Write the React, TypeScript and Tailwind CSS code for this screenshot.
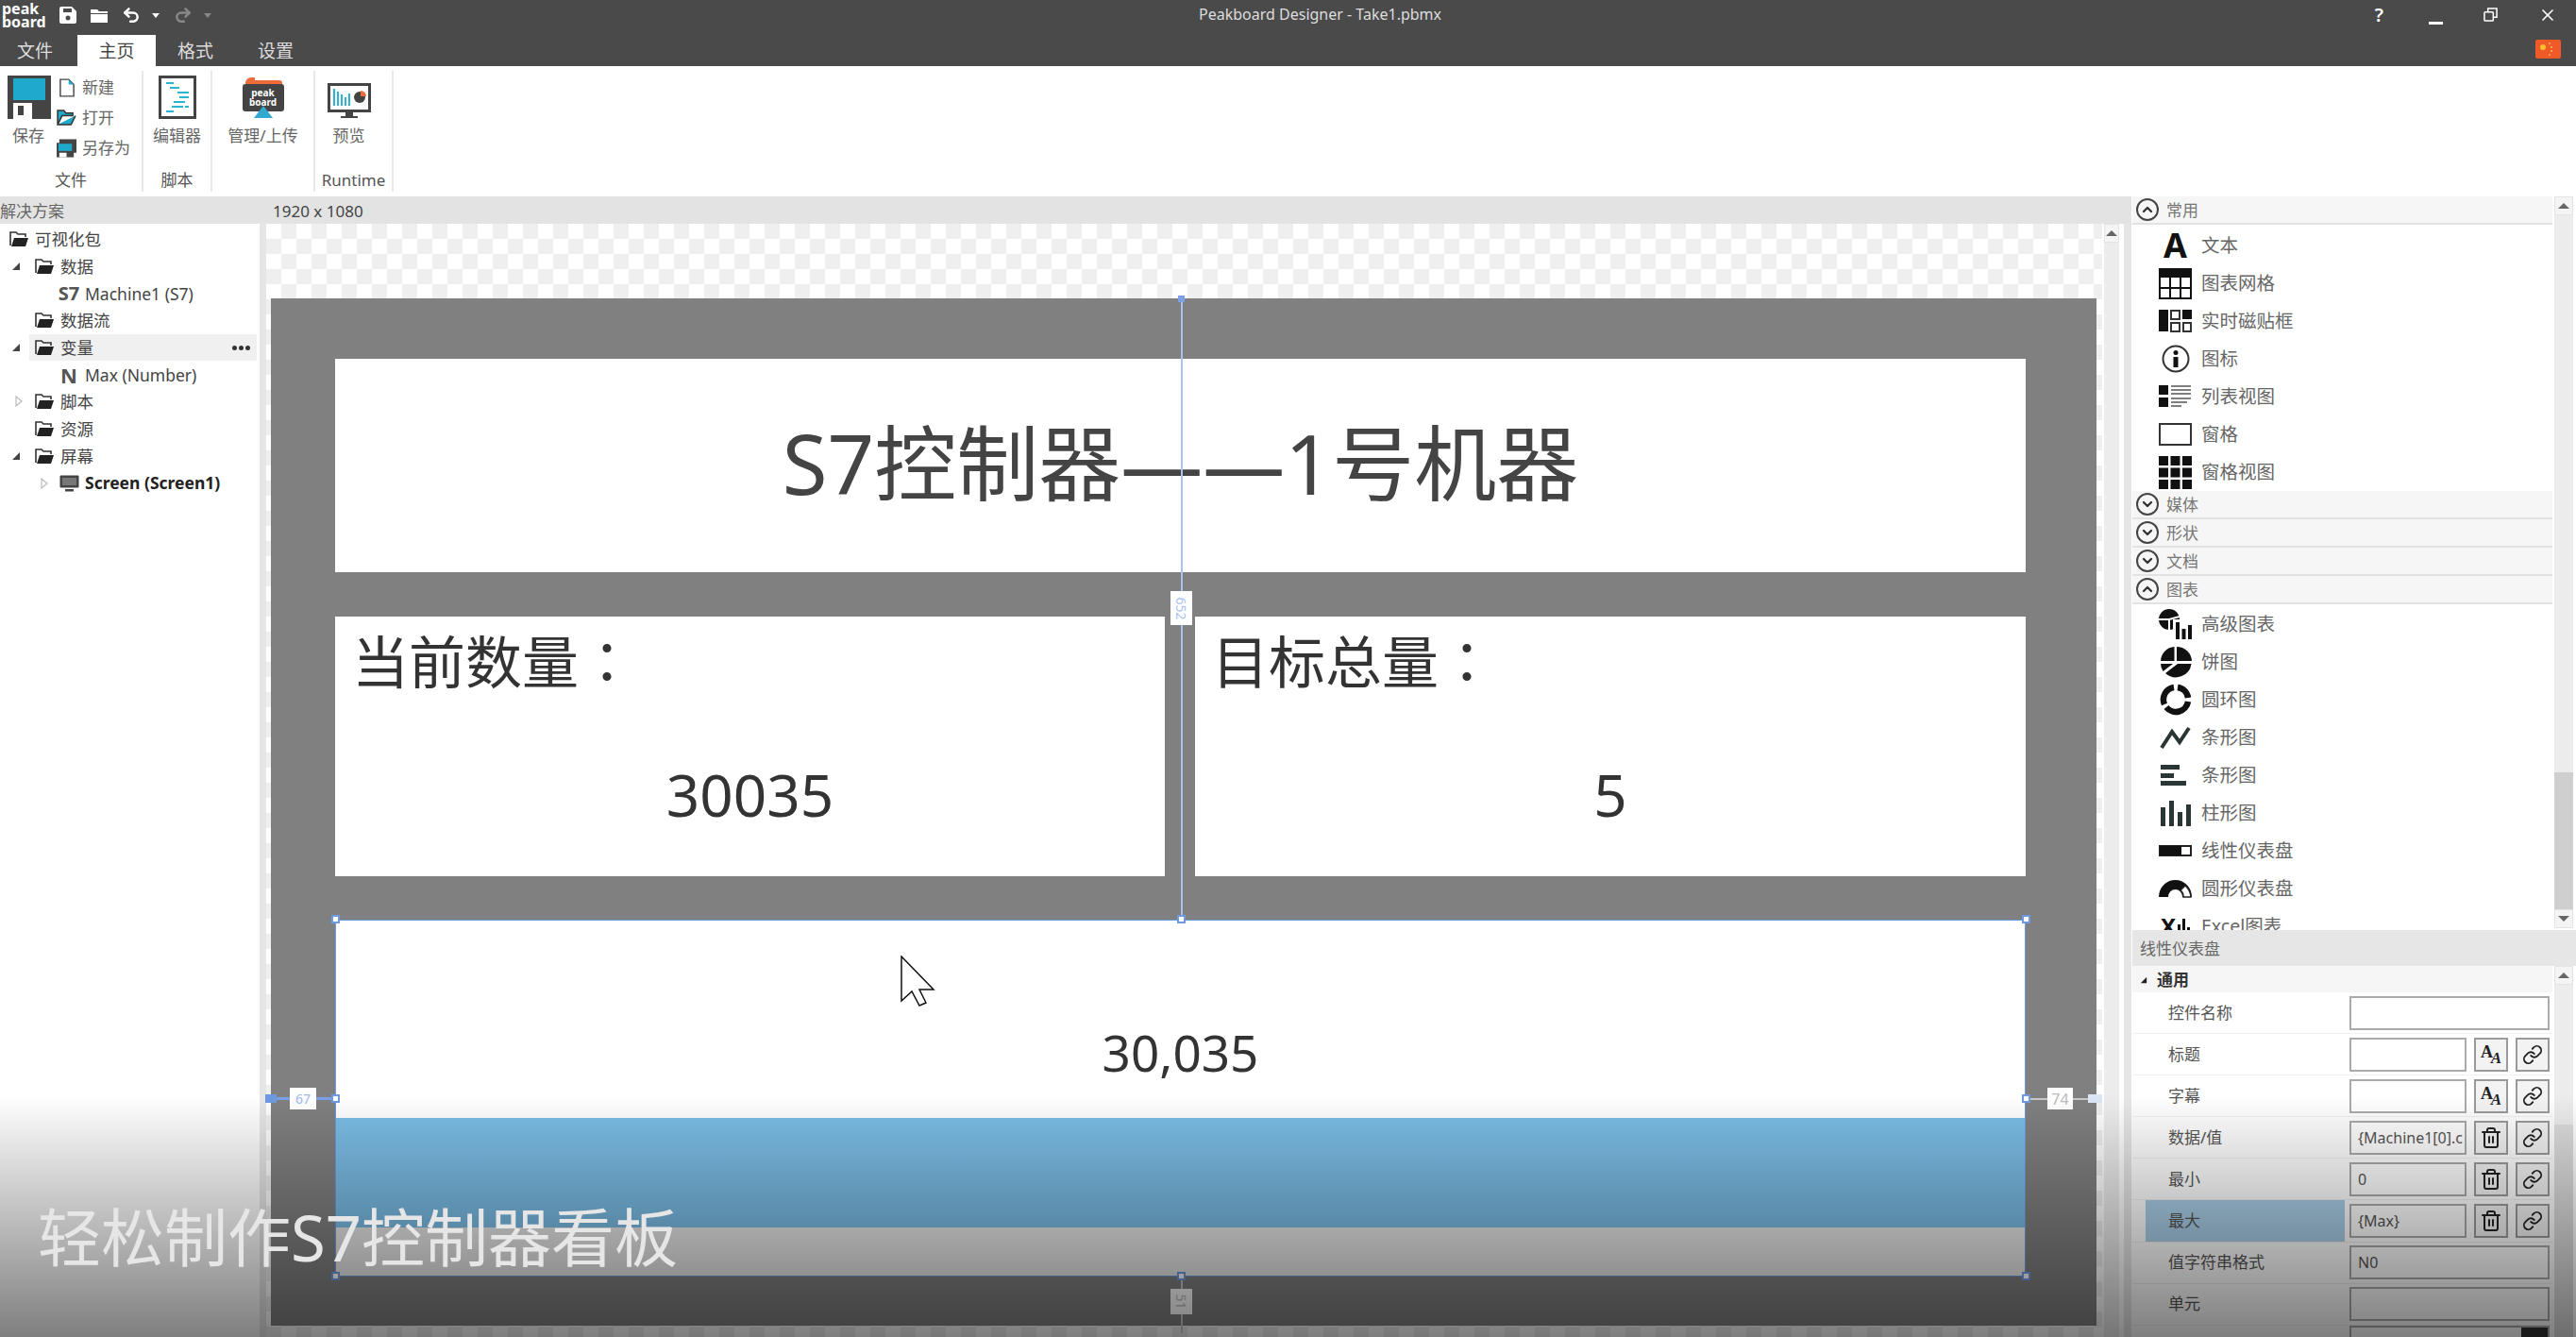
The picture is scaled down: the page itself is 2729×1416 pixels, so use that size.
import { ChevronDown, ChevronUp, Link, Redo2, Trash2, Undo2, X } from 'lucide-react'

const FOLDER_TREE = [
  { label: '可视化包', pad: 'pl-[9px]', arrow: null, icon: 'folder' },
  { label: '数据', pad: 'pl-[36px]', arrow: 'down', icon: 'folder' },
  { label: 'Machine1 (S7)', pad: 'pl-[62px]', arrow: null, icon: 'S7' },
  { label: '数据流', pad: 'pl-[36px]', arrow: null, icon: 'folder' },
  { label: '变量', pad: 'pl-[36px]', arrow: 'down', icon: 'folder', active: true },
  { label: 'Max (Number)', pad: 'pl-[62px]', arrow: null, icon: 'N' },
  { label: '脚本', pad: 'pl-[36px]', arrow: 'right', icon: 'folder' },
  { label: '资源', pad: 'pl-[36px]', arrow: null, icon: 'folder' },
  { label: '屏幕', pad: 'pl-[36px]', arrow: 'down', icon: 'folder' },
  { label: 'Screen (Screen1)', pad: 'pl-[62px]', arrow: 'rightInner', icon: 'screen', bold: true },
]

function FolderIcon({ className = 'h-[18px] w-[21px]' }: { className?: string }) {
  return (
    <svg viewBox="0 0 21 18" className={className}>
      <path d="M1 16V2h6l2 2h8v3" fill="none" stroke="#333" strokeWidth="1.6" />
      <path d="M2 17l3-9h15l-3 9z" fill="#222" />
    </svg>
  )
}

function Tri({ dir }: { dir: string }) {
  if (dir === 'down') {
    return (
      <svg viewBox="0 0 10 10" className="h-[10px] w-[10px]">
        <path d="M9 1v8H1z" fill="#444" />
      </svg>
    )
  }
  return (
    <svg viewBox="0 0 10 12" className="h-[12px] w-[10px]">
      <path d="M2 1l6 5-6 5z" fill="#fff" stroke="#bbb" strokeWidth="1.2" />
    </svg>
  )
}

function TreeRow({ row }: { row: (typeof FOLDER_TREE)[number] }) {
  return (
    <div className={`relative flex h-[28.7px] items-center gap-[6px] text-[17.5px] text-[#444] ${row.pad}`}>
      {row.active && <div className="absolute inset-y-0 left-[31px] right-[3px] bg-[#f0f0f0]" />}
      {row.arrow === 'down' && <div className="absolute left-[12px] z-10 flex"><Tri dir="down" /></div>}
      {row.arrow === 'right' && <div className="absolute left-[15px] z-10 flex"><Tri dir="right" /></div>}
      {row.arrow === 'rightInner' && <div className="absolute left-[42px] z-10 flex"><Tri dir="right" /></div>}
      <div className="z-10 flex w-[22px] shrink-0 items-center justify-center">
        {row.icon === 'folder' && <FolderIcon />}
        {row.icon === 'S7' && <span className="text-[20px] font-bold leading-none text-[#555]">S7</span>}
        {row.icon === 'N' && <span className="text-[22px] font-bold leading-none text-[#555]">N</span>}
        {row.icon === 'screen' && (
          <svg viewBox="0 0 21 18" className="h-[18px] w-[21px]">
            <rect x="0.5" y="0.5" width="20" height="13" rx="1" fill="#444" />
            <rect x="3" y="3" width="15" height="8" fill="#777" />
            <rect x="6" y="15" width="9" height="2.5" fill="#444" />
          </svg>
        )}
      </div>
      <span className={`z-10 ${row.bold ? 'font-bold text-[#222]' : ''}`}>{row.label}</span>
      {row.active && (
        <div className="absolute right-[10px] z-10 flex gap-[2px]">
          <i className="h-[5px] w-[5px] rounded-full bg-[#333]" />
          <i className="h-[5px] w-[5px] rounded-full bg-[#333]" />
          <i className="h-[5px] w-[5px] rounded-full bg-[#333]" />
        </div>
      )}
    </div>
  )
}

function RibbonGroup({ label, width, children }: { label: string; width: string; children: React.ReactNode }) {
  return (
    <div className={`flex h-[128px] flex-col border-r-2 border-[#e8e8e8] ${width}`}>
      <div className="flex h-[105px] pt-[5px]">{children}</div>
      <div className="text-center text-[17px] leading-[24px] text-[#555]">{label}</div>
    </div>
  )
}

function SectionHead({ label, open }: { label: string; open?: boolean }) {
  return (
    <div className="flex h-[30px] items-center gap-[8px] border-b-2 border-[#e2e2e2] bg-[#f6f6f6] pl-[4px] text-[17px] text-[#777]">
      <div className="flex h-[24px] w-[24px] items-center justify-center rounded-full border-2 border-[#444]">
        {open ? <ChevronUp size={16} strokeWidth={3.5} color="#333" /> : <ChevronDown size={16} strokeWidth={3.5} color="#333" />}
      </div>
      <span className="pt-[2px]">{label}</span>
    </div>
  )
}

function ToolRow({ label, children }: { label: string; children: React.ReactNode }) {
  return (
    <div className="flex h-[40px] shrink-0 items-center gap-[10px] pl-[28px] text-[19.5px] text-[#666]">
      <div className="flex h-[36px] w-[35px] items-center justify-center">{children}</div>
      {label}
    </div>
  )
}

function TextIcon() {
  return <span className="text-[36px] font-bold leading-none text-[#111]">A</span>
}

function GridIcon() {
  return (
    <svg viewBox="0 0 35 33" className="h-[33px] w-[35px]">
      <rect x="1" y="1" width="33" height="31" fill="#fff" stroke="#111" strokeWidth="2" />
      <rect x="1" y="1" width="33" height="9" fill="#111" />
      <path d="M12 10v22M23 10v22M1 21h33" stroke="#111" strokeWidth="2" />
    </svg>
  )
}

function TileIcon() {
  return (
    <svg viewBox="0 0 35 24" className="h-[24px] w-[35px]">
      <rect x="0" y="0" width="10" height="23" fill="#111" />
      <rect x="13" y="1" width="9" height="9" fill="#fff" stroke="#333" strokeWidth="2" />
      <rect x="25" y="0" width="10" height="10" fill="#111" />
      <rect x="13" y="14" width="9" height="9" fill="#fff" stroke="#333" strokeWidth="2" />
      <rect x="26" y="14" width="8" height="9" fill="#fff" stroke="#333" strokeWidth="2" />
    </svg>
  )
}

function InfoIcon() {
  return (
    <svg viewBox="0 0 30 30" className="h-[30px] w-[30px]">
      <circle cx="15" cy="15" r="13.5" fill="none" stroke="#333" strokeWidth="2" />
      <circle cx="15" cy="8.5" r="2.5" fill="#111" />
      <rect x="12.5" y="13" width="5" height="11" fill="#111" />
    </svg>
  )
}

function ListIcon() {
  return (
    <svg viewBox="0 0 35 24" className="h-[24px] w-[35px]">
      <rect x="0" y="0" width="10" height="10" fill="#111" />
      <rect x="0" y="13" width="10" height="10" fill="#111" />
      <path d="M13 1h21M13 5h21M13 9h21M13 14h21M13 18h17M13 22h11" stroke="#555" strokeWidth="1.4" />
    </svg>
  )
}

function PaneGridIcon() {
  return (
    <svg viewBox="0 0 35 35" className="h-[35px] w-[35px]" fill="#111">
      {[0, 12.5, 25].map((y) =>
        [0, 12.5, 25].map((x) => <rect key={`${x}-${y}`} x={x} y={y} width="10" height="10" />),
      )}
    </svg>
  )
}

function ComboIcon() {
  return (
    <svg viewBox="0 0 35 32" className="h-[32px] w-[35px]">
      <circle cx="11" cy="11" r="11" fill="#111" />
      <path d="M11 11v12M0 11h11l11-3" fill="none" stroke="#fff" strokeWidth="2" />
      <rect x="15" y="11" width="20" height="21" fill="#fff" />
      <rect x="18" y="14" width="4" height="18" fill="#111" />
      <rect x="24.5" y="21" width="4" height="11" fill="#111" />
      <rect x="31" y="17" width="4" height="15" fill="#111" />
    </svg>
  )
}

function PieIcon() {
  return (
    <svg viewBox="0 0 34 34" className="h-[34px] w-[34px]" fill="#111">
      <path d="M15.5 1v15H1A15.5 15.5 0 0 1 15.5 1z" />
      <path d="M18 1a16 16 0 0 1 16 15H18z" />
      <path d="M33.5 19A16.5 16.5 0 0 1 6 29l13-10z" />
      <path d="M1 19h13L3.5 27a16 16 0 0 1-2.5-8z" />
    </svg>
  )
}

function DonutIcon() {
  return (
    <svg viewBox="0 0 34 34" className="h-[34px] w-[34px]" fill="none" stroke="#111" strokeWidth="6.5">
      <path d="M15 4A13 13 0 0 0 5 22" />
      <path d="M19 4A13 13 0 0 1 30 15" />
      <path d="M30 19A13 13 0 0 1 7 25" />
    </svg>
  )
}

function LineIcon() {
  return (
    <svg viewBox="0 0 33 26" className="h-[26px] w-[33px]">
      <path d="M2 24L13 7l8 11L31 3" fill="none" stroke="#2a3535" strokeWidth="4" />
    </svg>
  )
}

function BarIcon() {
  return (
    <svg viewBox="0 0 35 24" className="h-[24px] w-[35px]" fill="#2a3535">
      <rect x="2" y="1" width="20" height="5" />
      <rect x="2" y="10" width="14" height="5" />
      <rect x="2" y="18" width="27" height="5" />
    </svg>
  )
}

function ColumnIcon() {
  return (
    <svg viewBox="0 0 35 27" className="h-[27px] w-[35px]" fill="#2a3535">
      <rect x="2" y="7" width="5" height="20" />
      <rect x="11" y="0" width="5" height="27" />
      <rect x="20" y="12" width="5" height="15" />
      <rect x="29" y="4" width="5" height="23" />
    </svg>
  )
}

function LinearIcon() {
  return (
    <svg viewBox="0 0 35 12" className="h-[12px] w-[35px]">
      <rect x="1" y="1" width="33" height="10" fill="#fff" stroke="#222" strokeWidth="2" />
      <rect x="1" y="1" width="23" height="10" fill="#111" />
    </svg>
  )
}

function RadialIcon() {
  return (
    <svg viewBox="0 0 35 20" className="h-[20px] w-[35px]">
      <path d="M0 19a17.5 18 0 0 1 35 0H25a7.5 8 0 0 0-15 0z" fill="#111" />
      <path d="M28 7a17 18 0 0 1 6 12H26a8 8 0 0 0-3-7z" fill="#fff" stroke="#222" strokeWidth="1.4" />
    </svg>
  )
}

function ExcelIcon() {
  return (
    <div className="flex items-end gap-[2px]">
      <span className="text-[24px] font-bold leading-none text-[#111]">X</span>
      <i className="h-[14px] w-[3px] bg-[#111]" />
      <i className="h-[20px] w-[3px] bg-[#111]" />
      <i className="h-[11px] w-[3px] bg-[#111]" />
    </div>
  )
}

function SquareBtn({ children }: { children: React.ReactNode }) {
  return (
    <div className="flex h-[36px] w-[36px] shrink-0 items-center justify-center border-2 border-[#9a9a9a] bg-[#f3f3f3]">
      {children}
    </div>
  )
}

function FontBtn() {
  return (
    <SquareBtn>
      <span className="relative h-[24px] w-[22px] font-['Liberation_Serif',serif] font-bold leading-none text-[#222]">
        <span className="absolute left-0 top-0 text-[18px]">A</span>
        <span className="absolute bottom-0 right-0 text-[17px] italic">A</span>
      </span>
    </SquareBtn>
  )
}

function LinkBtn() {
  return (
    <SquareBtn>
      <Link size={22} color="#222" strokeWidth={2} />
    </SquareBtn>
  )
}

function TrashBtn() {
  return (
    <SquareBtn>
      <Trash2 size={24} color="#222" strokeWidth={2} />
    </SquareBtn>
  )
}

function PropRow({ label, children, active }: { label: string; children: React.ReactNode; active?: boolean }) {
  return (
    <div className="flex h-[44.1px] shrink-0 items-center border-b border-[#f0f0f0] pl-[14px]">
      <div className={`flex h-full w-[211px] items-center pl-[24px] text-[17px] text-[#555] ${active ? 'bg-[#aacfe8]' : ''}`}>
        {label}
      </div>
      <div className="ml-[5px] flex w-[212px] gap-[8px]">{children}</div>
    </div>
  )
}

function Field({ value, short }: { value?: string; short?: boolean }) {
  return (
    <div
      className={`flex h-[36px] items-center overflow-hidden whitespace-nowrap border-2 border-[#aaa] bg-white pl-[7px] text-[16px] text-[#555] ${
        short ? 'w-[124px] shrink-0' : 'w-[212px]'
      }`}
    >
      {value}
    </div>
  )
}

function Handle({ className }: { className: string }) {
  return <div className={`absolute h-[9px] w-[9px] border-2 border-[#6f9ae0] bg-white ${className}`} />
}

function ScrollBtn({ up }: { up?: boolean }) {
  return (
    <div className="flex h-[20px] items-center justify-center border border-[#e4e4e4] bg-[#f4f4f4]">
      <div
        className={`h-0 w-0 border-x-[6px] border-x-transparent ${up ? 'border-b-[6px] border-b-[#666]' : 'border-t-[6px] border-t-[#666]'}`}
      />
    </div>
  )
}

export default function App() {
  return (
    <div className="relative flex h-[1416px] w-[2729px] flex-col overflow-hidden bg-white font-['Noto_Sans','Noto_Sans_CJK_SC',sans-serif]">
      {/* Title bar */}
      <header className="flex h-[37px] shrink-0 items-start bg-[#4a4a4a] pt-[2px] text-white">
        <div className="flex w-[1270px] items-center">
          <div className="ml-[2px] w-[48px] text-[16px] font-bold leading-[14px]">
            <div>peak</div>
            <div>board</div>
          </div>
          <svg viewBox="0 0 18 18" className="ml-[13px] h-[18px] w-[18px]" fill="#fff">
            <path d="M0 2a2 2 0 0 1 2-2h11l5 5v11a2 2 0 0 1-2 2H2a2 2 0 0 1-2-2z" />
            <rect x="4" y="2" width="9" height="4" fill="#4a4a4a" />
            <circle cx="9" cy="12" r="2.5" fill="#4a4a4a" />
          </svg>
          <svg viewBox="0 0 18 16" className="ml-[15px] h-[16px] w-[18px]" fill="#fff">
            <path d="M0 2h7l2 2h9v2H0zM0 7h18v9H0z" />
          </svg>
          <Undo2 size={20} className="ml-[15px]" color="#fff" strokeWidth={3} />
          <div className="ml-[12px] h-0 w-0 border-x-[4px] border-t-[5px] border-x-transparent border-t-white" />
          <Redo2 size={20} className="ml-[15px]" color="#888" strokeWidth={3} />
          <div className="ml-[12px] h-0 w-0 border-x-[4px] border-t-[5px] border-x-transparent border-t-[#888]" />
        </div>
        <div className="mt-[5px] text-[16px] leading-none text-[#ddd]">Peakboard Designer - Take1.pbmx</div>
        <div className="ml-auto flex h-[27px] items-center pr-[20px]">
          <span className="text-[20px] font-semibold leading-none">?</span>
          <div className="ml-[48px] mt-[18px] h-[3px] w-[15px] bg-white" />
          <svg viewBox="0 0 16 16" className="ml-[43px] h-[15px] w-[15px]" fill="none" stroke="#fff" strokeWidth="1.6">
            <rect x="1" y="5" width="10" height="10" rx="1" />
            <path d="M5 5V1h10v10h-4" />
          </svg>
          <X size={20} className="ml-[43px]" color="#fff" strokeWidth={2} />
        </div>
      </header>

      {/* Tabs */}
      <nav className="flex h-[33px] shrink-0 items-end bg-[#4a4a4a] text-[19px] leading-[32px] text-[#ddd]">
        <div className="w-[82px] pr-[8px] pt-[1px] text-center">文件</div>
        <div className="w-[83px] bg-white pt-[1px] text-center text-[#444]">主页</div>
        <div className="w-[84px] pt-[1px] text-center">格式</div>
        <div className="w-[86px] pt-[1px] text-center">设置</div>
        <div className="relative mb-[8px] ml-auto mr-[16px] h-[20px] w-[27px] rounded-[2px] bg-[#f05a28]">
          <i className="absolute left-[5px] top-[5px] h-[6px] w-[6px] rounded-full bg-[#fbc02d]" />
          <i className="absolute left-[14px] top-[3px] h-[2px] w-[2px] bg-[#f9a03f]" />
          <i className="absolute left-[16px] top-[7px] h-[2px] w-[2px] bg-[#f9a03f]" />
          <i className="absolute left-[16px] top-[11px] h-[2px] w-[2px] bg-[#f9a03f]" />
          <i className="absolute left-[14px] top-[15px] h-[2px] w-[2px] bg-[#f9a03f]" />
        </div>
      </nav>

      {/* Ribbon */}
      <section className="flex h-[138px] shrink-0 pt-[5px]">
        <RibbonGroup label="文件" width="w-[152px]">
          <div className="flex w-[60px] flex-col items-center">
            <svg viewBox="0 0 46 46" className="ml-[1px] h-[46px] w-[46px]">
              <rect width="46" height="46" fill="#444" />
              <rect x="6" y="3" width="34" height="23" fill="#1fa9cb" />
              <rect x="6" y="29" width="20" height="17" fill="#fff" />
              <rect x="11" y="32" width="6" height="10" fill="#444" />
            </svg>
            <span className="mt-[5px] text-[17px] text-[#666]">保存</span>
          </div>
          <div className="-mt-[2px] flex flex-col gap-[3px] text-[17px] text-[#666]">
            <div className="flex h-[29px] items-center gap-[8px]">
              <svg viewBox="0 0 18 22" className="ml-[3px] h-[22px] w-[16px]">
                <path d="M1 1h10l6 6v14H1z" fill="#fff" stroke="#444" strokeWidth="1.6" />
                <path d="M11 1l6 6h-6z" fill="#1fa9cb" />
              </svg>
              新建
            </div>
            <div className="flex h-[29px] items-center gap-[6px]">
              <svg viewBox="0 0 22 18" className="h-[17px] w-[21px]">
                <path d="M1 17V1h7l2 3h8v3H6l-5 10h15l5-10" fill="#1fa9cb" stroke="#333" strokeWidth="1.6" />
              </svg>
              打开
            </div>
            <div className="flex h-[29px] items-center gap-[6px]">
              <svg viewBox="0 0 22 20" className="h-[20px] w-[21px]">
                <rect x="3" y="0" width="19" height="15" fill="#444" />
                <rect x="0" y="4" width="19" height="16" fill="#444" />
                <rect x="2" y="5" width="15" height="8" fill="#1fa9cb" />
                <rect x="3" y="15" width="8" height="5" fill="#fff" />
              </svg>
              另存为
            </div>
          </div>
        </RibbonGroup>
        <RibbonGroup label="脚本" width="w-[73px]">
          <div className="flex w-full flex-col items-center">
            <svg viewBox="0 0 40 46" className="h-[46px] w-[40px]">
              <rect x="1.5" y="1.5" width="37" height="43" fill="#fff" stroke="#444" strokeWidth="3" />
              <path d="M8 8h8M12 13h10M20 18h12M22 23h10M16 28h12M14 33h12M28 33h4M8 38h8" stroke="#2fb3d3" strokeWidth="2" />
            </svg>
            <span className="mt-[5px] text-[17px] text-[#666]">编辑器</span>
          </div>
        </RibbonGroup>
        <RibbonGroup label="" width="w-[109px]">
          <div className="flex w-full flex-col items-center">
            <div className="relative h-[46px] w-[46px]">
              <svg viewBox="0 0 46 46" className="h-[46px] w-[46px]">
                <path d="M10 2h4v3h26a3 3 0 0 1 0 6H14v3h-4a6 6 0 0 1 0-12z" fill="#ee6b3a" />
                <rect x="1" y="9" width="44" height="29" rx="3" fill="#444" />
                <path d="M23 32l-10 13h20z" fill="#2fa9cf" />
              </svg>
              <div className="absolute inset-x-0 top-[13px] text-center text-[10px] font-bold leading-[10px] text-white">
                <div>peak</div>
                <div>board</div>
              </div>
            </div>
            <span className="mt-[5px] text-[17px] text-[#666]">管理/上传</span>
          </div>
        </RibbonGroup>
        <RibbonGroup label="Runtime" width="w-[83px]">
          <div className="-ml-[5px] flex w-full flex-col items-center">
            <svg viewBox="0 0 46 38" className="mt-[8px] h-[38px] w-[46px]">
              <rect x="1.5" y="1.5" width="43" height="28" fill="#fff" stroke="#444" strokeWidth="3" />
              <path d="M7 6v18M11 9v15M15 12v12M19 15v9M23 11v13" stroke="#2fb3d3" strokeWidth="2" />
              <circle cx="34" cy="15" r="6" fill="#444" />
              <path d="M35 8a6 6 0 0 1 6 6h-6z" fill="#ee6b3a" />
              <path d="M14 36h18M20 30h6v6h-6z" fill="#444" stroke="#444" strokeWidth="2" />
            </svg>
            <span className="mt-[5px] text-[17px] text-[#666]">预览</span>
          </div>
        </RibbonGroup>
      </section>

      {/* Workspace */}
      <main className="flex min-h-0 flex-1">
        {/* Solution tree */}
        <aside className="w-[275px] shrink-0">
          <div className="h-[29px] bg-[#e3e3e3] pt-[1px] text-[17px] leading-[29px] text-[#666]">解决方案</div>
          <div className="pt-[2px]">
            {FOLDER_TREE.map((row) => (
              <TreeRow key={row.label} row={row} />
            ))}
          </div>
        </aside>

        {/* Canvas column */}
        <div className="flex w-[1983px] shrink-0 flex-col">
          <div className="h-[29px] bg-[#e3e3e3] pl-[14px] pt-[1px] text-[17px] leading-[29px] text-[#444]">
            <span>1920 x 1080</span>
          </div>
          <div className="flex min-h-0 flex-1">
            <div className="w-[7px] shrink-0 bg-[#e6e6e6]" />
            <div className="w-[1945px] shrink-0 bg-[repeating-conic-gradient(#efefef_0_25%,#ffffff_0_50%)] bg-[length:32px_32px] pl-[5px] pt-[79px]">
              <div className="relative h-[1088px] w-[1934px] bg-[#808080] pl-[68px] pr-[75px] pt-[64px]">
                <div className="flex h-[226px] items-center justify-center bg-white pb-[5px] text-[87px] leading-none text-[#444]">
                  S7控制器——1号机器
                </div>
                <div className="mt-[47px] flex h-[275px] gap-[32px]">
                  <div className="flex w-[879px] flex-col bg-white pl-[18px] pt-[10px] text-[#333]">
                    <div className="text-[60px] leading-[70px]">
                      当前数量<span className="font-['Noto_Sans_CJK_TC',sans-serif]">：</span>
                    </div>
                    <div className="mt-[63px] pr-[18px] text-center text-[62px] leading-[84px]">30035</div>
                  </div>
                  <div className="flex w-[880px] flex-col bg-white pl-[18px] pt-[10px] text-[#333]">
                    <div className="text-[60px] leading-[70px]">
                      目标总量<span className="font-['Noto_Sans_CJK_TC',sans-serif]">：</span>
                    </div>
                    <div className="mt-[63px] pr-[18px] text-center text-[62px] leading-[84px]">5</div>
                  </div>
                </div>
                <div className="mt-[46px] flex h-[378px] flex-col border border-[#6f9ae0]">
                  <div className="flex h-[209px] items-end justify-center bg-white pb-[34px] text-[53px] leading-[70px] text-[#333]">
                    30,035
                  </div>
                  <div className="h-[116px] bg-[#7bbde6]" />
                  <div className="flex-1 bg-[#e8e8e8]" />
                </div>

                {/* Selection guides */}
                <div className="absolute left-[964px] top-0 h-[657px] w-[2px] bg-[#a9c3f0]" />
                <div className="absolute left-[961px] top-[-3px] h-[7px] w-[7px] bg-[#7aa0e6]" />
                <div className="absolute left-[953px] top-[310px] flex h-[36px] w-[23px] items-center justify-center bg-white">
                  <span className="rotate-90 text-[14px] text-[#a9c3f0]">652</span>
                </div>
                <Handle className="left-[960px] top-[653px]" />
                <Handle className="left-[64px] top-[653px]" />
                <Handle className="right-[70px] top-[653px]" />
                <Handle className="left-[64px] top-[843px]" />
                <Handle className="right-[70px] top-[843px]" />
                <Handle className="left-[64px] top-[1031px]" />
                <Handle className="right-[70px] top-[1031px]" />
                <Handle className="left-[960px] top-[1031px]" />
                <div className="absolute left-[-6px] top-[846px] h-[3px] w-[70px] bg-[#7aa0e6]" />
                <div className="absolute left-[-6px] top-[843px] h-[9px] w-[12px] bg-[#6f9ae0]" />
                <div className="absolute left-[20px] top-[836px] flex h-[23px] w-[28px] items-center justify-center bg-white text-[14px] text-[#9db9ea]">
                  67
                </div>
                <div className="absolute right-[0px] top-[847px] h-[2px] w-[70px] bg-[#c8c8c8]" />
                <div className="absolute right-[-6px] top-[843px] h-[9px] w-[15px] bg-[#dde6f5]" />
                <div className="absolute right-[25px] top-[836px] flex h-[23px] w-[27px] items-center justify-center bg-white text-[16px] text-[#bbb]">
                  74
                </div>
                <div className="absolute left-[964px] top-[1040px] h-[56px] w-[2px] bg-[#c8c8c8]" />
                <div className="absolute left-[953px] top-[1049px] flex h-[27px] w-[23px] items-center justify-center bg-white">
                  <span className="rotate-90 text-[14px] text-[#bbb]">51</span>
                </div>

                {/* Mouse pointer */}
                <svg viewBox="0 0 37 54" className="absolute left-[667px] top-[696px] h-[54px] w-[37px]">
                  <path d="M1 1v47l11-10 8 15 7-3-7-14h15z" fill="#fff" stroke="#111" strokeWidth="1.5" />
                </svg>
              </div>
            </div>
            <div className="ml-[2px] w-[16px] shrink-0 bg-[#ececec]">
              <ScrollBtn up />
            </div>
            <div className="ml-[5px] w-[8px] shrink-0 bg-[#e6e6e6]" />
          </div>
        </div>

        {/* Toolbox and properties */}
        <aside className="flex w-[471px] shrink-0 flex-col pl-[1px]">
          <div className="flex h-[777px] shrink-0">
            <div className="w-[445px] shrink-0 overflow-hidden">
              <SectionHead label="常用" open />
              <div className="flex h-[282px] flex-col pt-[2px]">
                <ToolRow label="文本"><TextIcon /></ToolRow>
                <ToolRow label="图表网格"><GridIcon /></ToolRow>
                <ToolRow label="实时磁贴框"><TileIcon /></ToolRow>
                <ToolRow label="图标"><InfoIcon /></ToolRow>
                <ToolRow label="列表视图"><ListIcon /></ToolRow>
                <ToolRow label="窗格">
                  <svg viewBox="0 0 35 24" className="h-[24px] w-[35px]">
                    <rect x="1" y="1" width="33" height="22" fill="#fff" stroke="#333" strokeWidth="2" />
                  </svg>
                </ToolRow>
                <ToolRow label="窗格视图"><PaneGridIcon /></ToolRow>
              </div>
              <SectionHead label="媒体" />
              <SectionHead label="形状" />
              <SectionHead label="文档" />
              <SectionHead label="图表" open />
              <div className="flex flex-col pt-[1px]">
                <ToolRow label="高级图表"><ComboIcon /></ToolRow>
                <ToolRow label="饼图"><PieIcon /></ToolRow>
                <ToolRow label="圆环图"><DonutIcon /></ToolRow>
                <ToolRow label="条形图"><LineIcon /></ToolRow>
                <ToolRow label="条形图"><BarIcon /></ToolRow>
                <ToolRow label="柱形图"><ColumnIcon /></ToolRow>
                <ToolRow label="线性仪表盘"><LinearIcon /></ToolRow>
                <ToolRow label="圆形仪表盘"><RadialIcon /></ToolRow>
                <ToolRow label="Excel图表"><ExcelIcon /></ToolRow>
              </div>
            </div>
            <div className="ml-[2px] flex h-[775px] w-[20px] flex-col">
              <ScrollBtn up />
              <div className="h-[590px] bg-[#ececec]" />
              <div className="flex-1 bg-[#cfcfcf]" />
              <ScrollBtn />
            </div>
          </div>

          <div className="flex h-[38px] shrink-0 items-center bg-[#e6e6e6] pl-[8px] pt-[2px] text-[17px] text-[#666]">线性仪表盘</div>
          <div className="flex min-h-0 flex-1 overflow-hidden">
            <div className="w-[445px] shrink-0">
              <div className="flex h-[28px] items-center gap-[8px] bg-[#f6f6f6] pl-[8px] pt-[1px] text-[17px] font-bold text-[#333]">
                <svg viewBox="0 0 10 10" className="h-[8px] w-[8px]">
                  <path d="M9 1v8H1z" fill="#222" />
                </svg>
                <span className="ml-[2px]">通用</span>
              </div>
              <PropRow label="控件名称"><Field /></PropRow>
              <PropRow label="标题"><Field short /><FontBtn /><LinkBtn /></PropRow>
              <PropRow label="字幕"><Field short /><FontBtn /><LinkBtn /></PropRow>
              <PropRow label="数据/值"><Field short value="{Machine1[0].c" /><TrashBtn /><LinkBtn /></PropRow>
              <PropRow label="最小"><Field short value="0" /><TrashBtn /><LinkBtn /></PropRow>
              <PropRow label="最大" active><Field short value="{Max}" /><TrashBtn /><LinkBtn /></PropRow>
              <PropRow label="值字符串格式"><Field value="N0" /></PropRow>
              <PropRow label="单元"><Field /></PropRow>
              <div className="ml-[230px] flex h-[36px] w-[212px] justify-end border-2 border-[#aaa] bg-white">
                <div className="h-full w-[28px] bg-[#333]" />
              </div>
            </div>
            <div className="ml-[2px] w-[20px] shrink-0">
              <ScrollBtn up />
              <div className="h-[148px] bg-[#ececec]" />
              <div className="h-[300px] bg-[#dcdcdc]" />
            </div>
          </div>
        </aside>
      </main>

      {/* Video caption overlay */}
      <div className="pointer-events-none absolute inset-x-0 bottom-0 flex h-[256px] items-end bg-[linear-gradient(to_bottom,rgba(0,0,0,0),rgba(0,0,0,0.5))] pb-[72px] pl-[40px]">
        <div className="whitespace-nowrap text-[67px] leading-none text-[#e6e6e6]">轻松制作S7控制器看板</div>
      </div>
    </div>
  )
}
